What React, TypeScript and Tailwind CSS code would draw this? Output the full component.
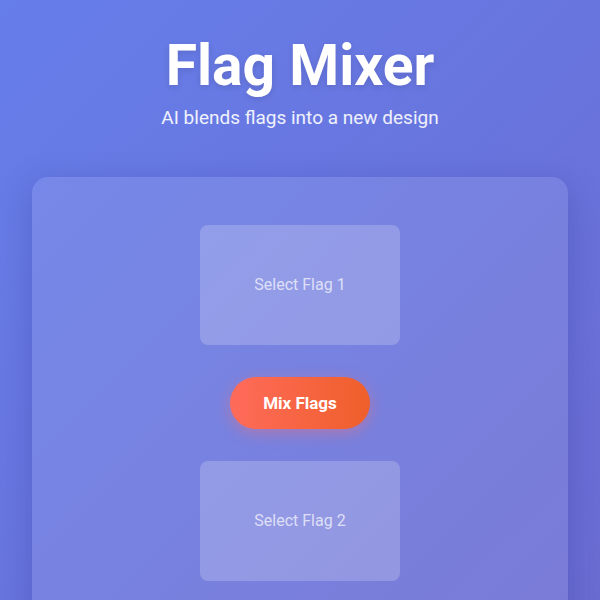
import React from 'react';

const FlagSlot: React.FC<{ label: string }> = ({ label }) => (
  <button className="flex h-[120px] w-[200px] items-center justify-center rounded-lg bg-white/20 text-base text-white/70">
    {label}
  </button>
);

export default function App() {
  return (
    <div
      className="h-screen overflow-hidden bg-[linear-gradient(135deg,#667eea_0%,#6b6cd2_100%)] px-8 pt-8 text-white"
      style={{ fontFamily: 'Roboto, "Noto Sans", sans-serif' }}
    >
      <header className="text-center">
        <h1 className="text-[57px] font-bold leading-[1.2] [text-shadow:0_2px_6px_rgba(0,0,0,0.12)]">Flag Mixer</h1>
        <p className="mt-1 text-[19px] leading-[1.5] text-white/90">AI blends flags into a new design</p>
      </header>

      <main className="mt-[44px] flex flex-col items-center gap-8 rounded-2xl bg-white/10 px-8 pt-12 pb-12 shadow-[0_8px_32px_rgba(31,38,135,0.25)]">
        <FlagSlot label="Select Flag 1" />
        <button className="rounded-full bg-[linear-gradient(90deg,#ff6b5b,#ee5f2a)] px-[33px] py-[14px] text-[17px] leading-6 font-bold text-white shadow-[0_4px_15px_rgba(255,107,107,0.4)]">
          Mix Flags
        </button>
        <FlagSlot label="Select Flag 2" />
      </main>
    </div>
  );
}
